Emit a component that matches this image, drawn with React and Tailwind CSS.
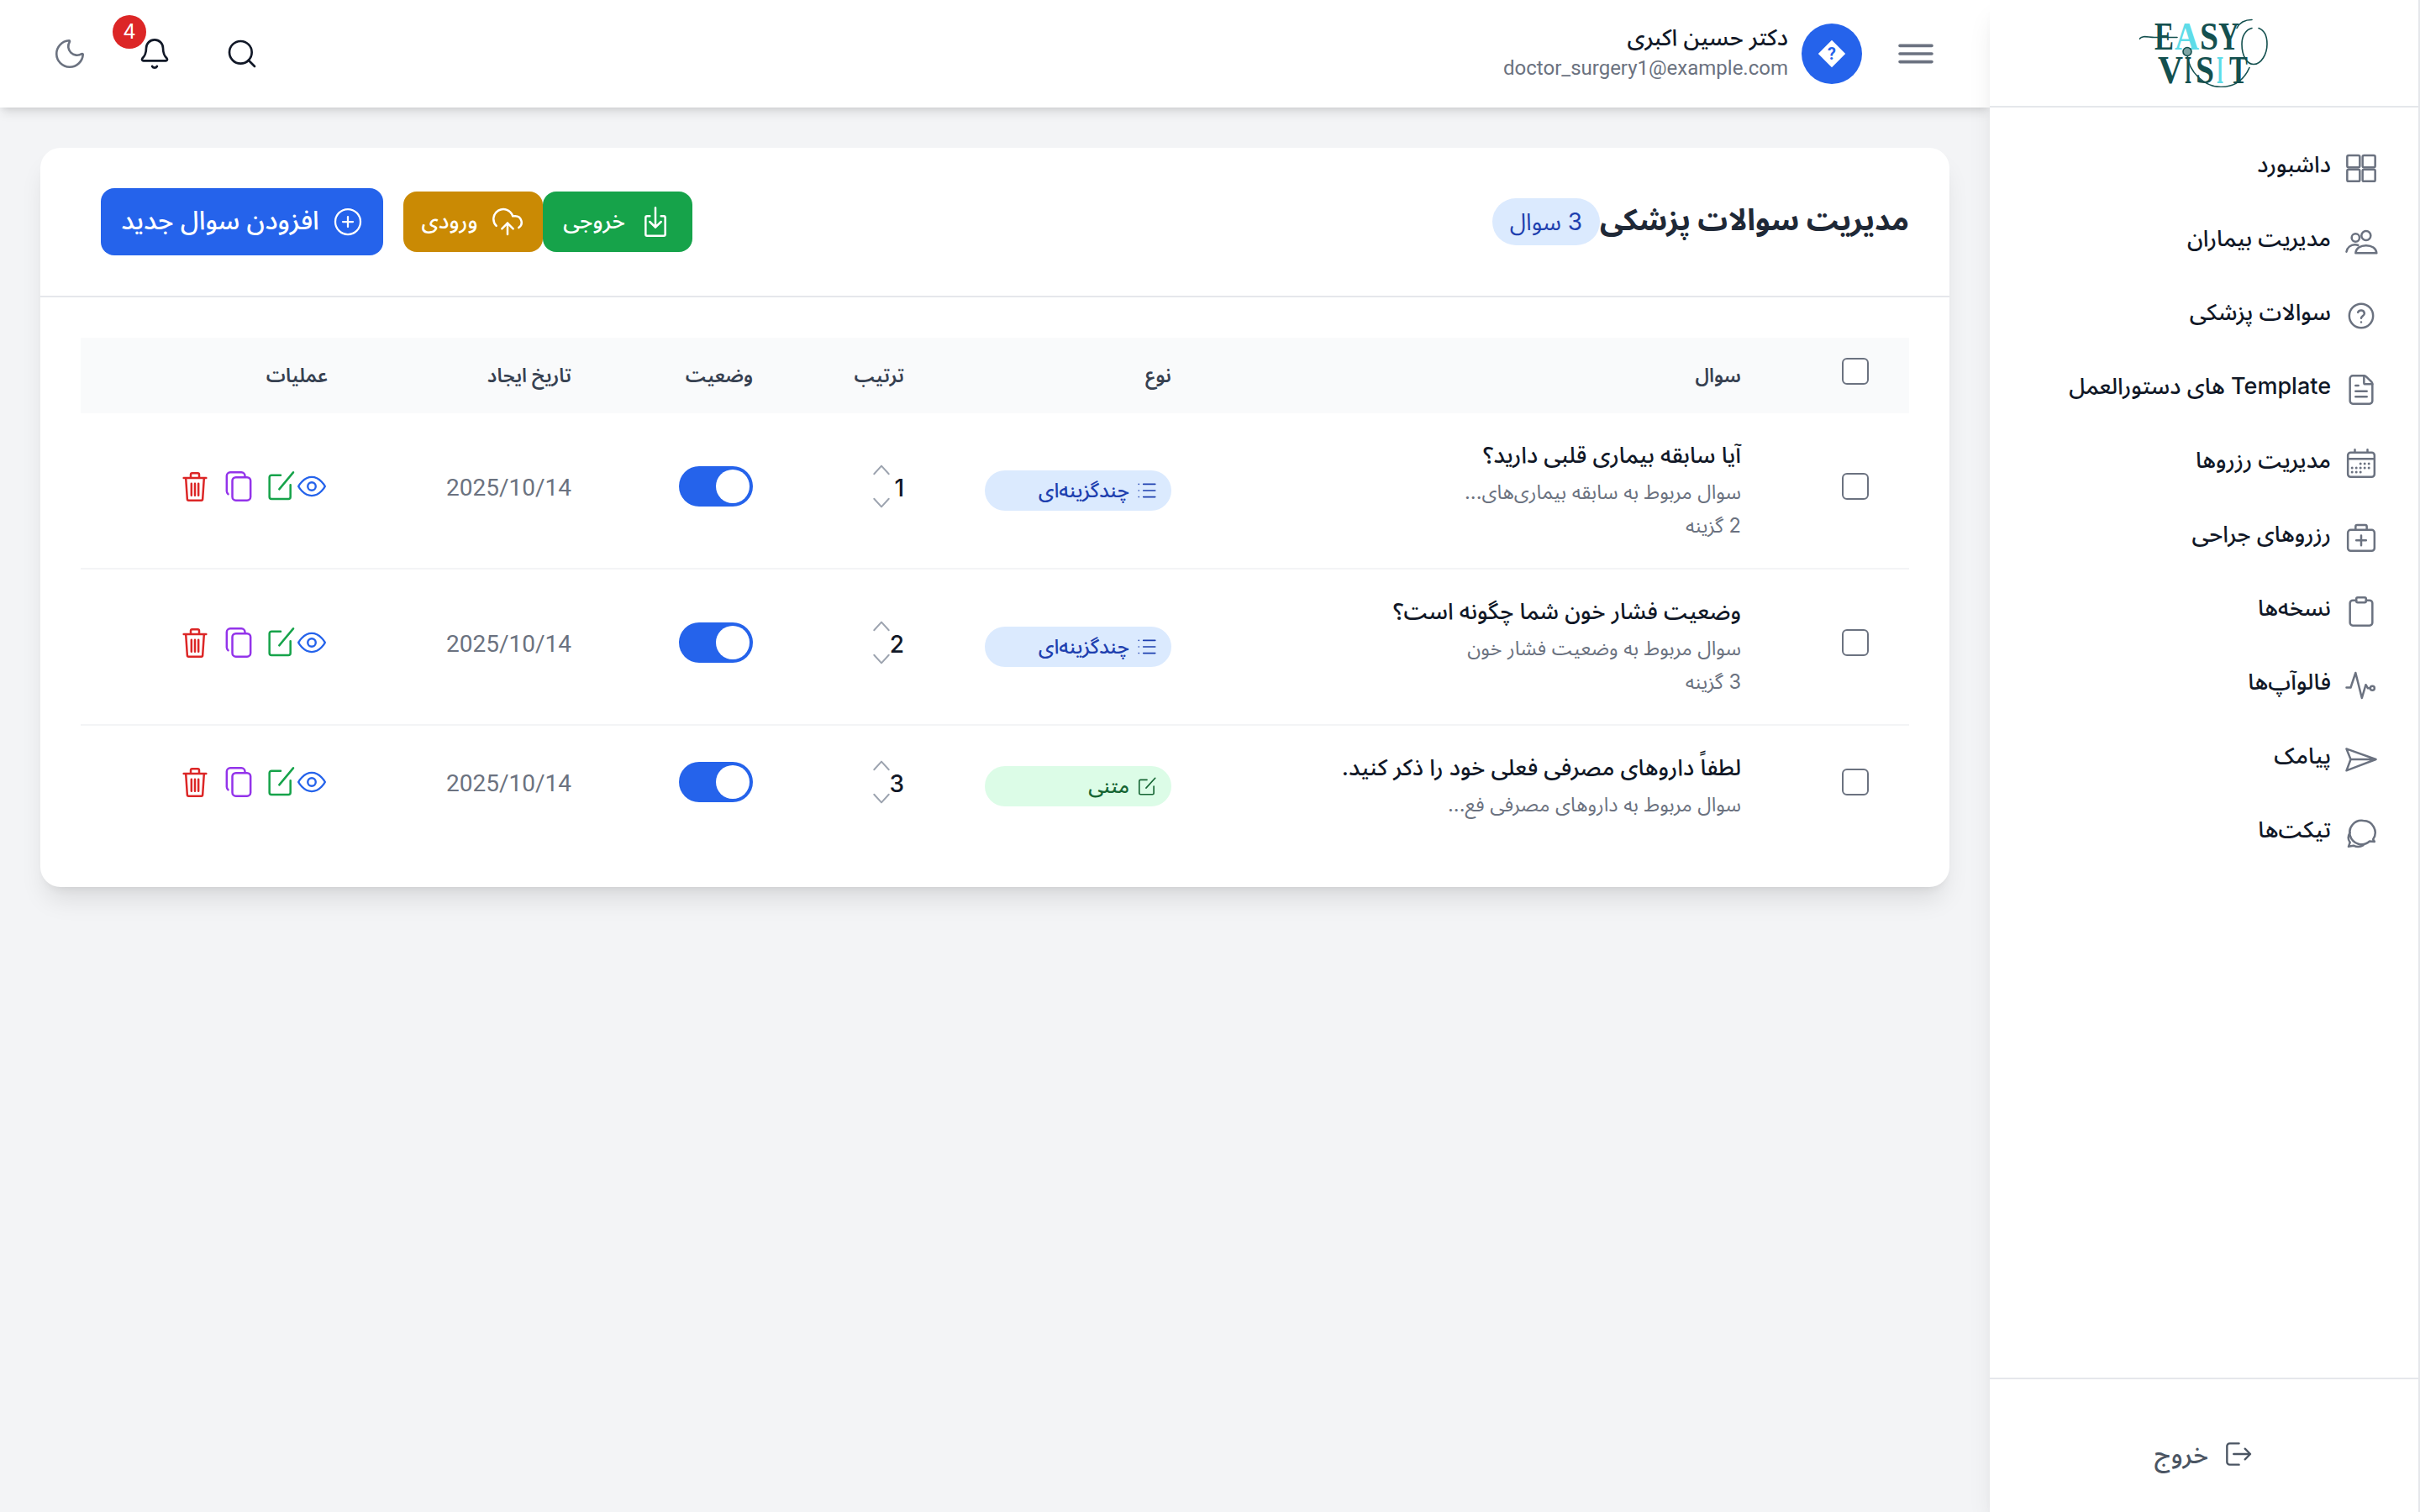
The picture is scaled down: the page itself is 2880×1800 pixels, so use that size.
import { Bell, CirclePlus, CloudUpload, FileText, List, Moon, Search } from 'lucide-react'

const FONT = "[font-family:Inter,'Noto_Sans_Arabic','DejaVu_Sans',sans-serif]"
const ROBOTO = "[font-family:Roboto,'Noto_Sans_Arabic','DejaVu_Sans',sans-serif]"

function Ico({ className, children, sw = 1.5 }) {
  return (
    <svg viewBox="0 0 24 24" fill="none" stroke="currentColor" strokeWidth={sw} strokeLinecap="round" strokeLinejoin="round" className={className}>
      {children}
    </svg>
  )
}

const GridIcon = (p) => (
  <Ico {...p}>
    <rect x="2" y="3" width="9" height="8.500" rx="1" />
    <rect x="13" y="3" width="9" height="8.500" rx="1" />
    <rect x="2" y="13" width="9" height="8.500" rx="1" />
    <rect x="13" y="13" width="9" height="8.500" rx="1" />
  </Ico>
)
const UsersIcon = (p) => (
  <Ico {...p}>
    <circle cx="8" cy="9" r="2.800" />
    <circle cx="15.500" cy="7.500" r="3.300" />
    <path d="M1.500 19c.4-3 3-5 6-5 .9 0 1.600.1 2.300.4" />
    <path d="M8 20c.3-3.500 3.500-5.500 7.500-5.500S22.700 16.500 23 20Z" />
  </Ico>
)
const HelpIcon = (p) => (
  <Ico {...p}>
    <circle cx="12" cy="12" r="8.500" />
    <path d="M9.700 9.500a2.400 2.400 0 0 1 4.600.8c0 1.600-2.300 2-2.300 3.300M12 16.500h.01" />
  </Ico>
)
const CalendarIcon = (p) => (
  <Ico {...p}>
    <rect x="2.500" y="4" width="19" height="17.500" rx="2" />
    <path d="M2.500 8.500h19M7.500 2v2M16.500 2v2" />
    <path strokeWidth="1.800" d="M11.500 12h.01M14.500 12h.01M17.500 12h.01M5.500 15h.01M8.500 15h.01M11.500 15h.01M14.500 15h.01M17.500 15h.01M5.500 18h.01M8.500 18h.01M11.500 18h.01" />
  </Ico>
)
const MedicalIcon = (p) => (
  <Ico {...p}>
    <rect x="2.500" y="6.500" width="19" height="15" rx="2" />
    <path d="M8 6.500V4a1 1 0 0 1 1-1h6a1 1 0 0 1 1 1v2.500M12 10.500v7M8.500 14h7" />
  </Ico>
)
const ClipboardIcon = (p) => (
  <Ico {...p}>
    <path d="M8.500 4H6a2 2 0 0 0-2 2v14a2 2 0 0 0 2 2h12a2 2 0 0 0 2-2V6a2 2 0 0 0-2-2h-2.500" />
    <rect x="8.500" y="2" width="7" height="3.500" rx="1" />
  </Ico>
)
const PulseIcon = (p) => (
  <Ico {...p}>
    <path d="M1.500 13.500H4.500L8 3l4.500 18 2.800-9.500 1.500 2.500h1.200" />
    <circle cx="20" cy="14" r="1.500" />
  </Ico>
)
const SendIcon = (p) => (
  <Ico {...p}>
    <path d="M1.500 4.500 22.500 12 1.500 20l3-8ZM4.500 12h18" />
  </Ico>
)
const ChatIcon = (p) => (
  <Ico {...p}>
    <path d="M13.500 3a8.500 8.500 0 0 1 7 13.300l1 1.700-3.500-.3A8.500 8.500 0 1 1 13.500 3Z" />
    <path d="M4 11.500c-1.500 2.500-1.500 5 0 7l-1 3 3.500-.7c2.500 1.200 5 1 7-.3" />
  </Ico>
)
const LogoutIcon = (p) => (
  <Ico {...p}>
    <path d="M13 4H6a2 2 0 0 0-2 2v12a2 2 0 0 0 2 2h7M9 12h12M17.500 8l4 4-4 4" />
  </Ico>
)
const ExportIcon = (p) => (
  <Ico {...p}>
    <path d="M8 8H6a1 1 0 0 0-1 1v12a1 1 0 0 0 1 1h12a1 1 0 0 0 1-1V9a1 1 0 0 0-1-1h-2M12 2v14M8 12l4 4 4-4" />
  </Ico>
)
const EyeIcon = (p) => (
  <Ico {...p}>
    <path d="M2 12s3.600-7 10-7 10 7 10 7-3.600 7-10 7-10-7-10-7Z" />
    <circle cx="12" cy="12" r="3" />
  </Ico>
)
const EditIcon = (p) => (
  <Ico {...p}>
    <path d="M12 4H5.500a1.500 1.500 0 0 0-1.500 1.500v14A1.500 1.500 0 0 0 5.500 21h12a1.500 1.500 0 0 0 1.500-1.500V11M11 14l10-12" />
  </Ico>
)
const CopyIcon = (p) => (
  <Ico {...p}>
    <rect x="7.500" y="5.500" width="13" height="16.500" rx="2.500" />
    <path d="M4.500 17.500A2.500 2.500 0 0 1 3.500 15.500V4.500A2.500 2.500 0 0 1 6 2h8a2.500 2.500 0 0 1 2.500 2.500" />
  </Ico>
)
const TrashIcon = (p) => (
  <Ico {...p}>
    <path d="M4 6h16M9 6V3.500a1 1 0 0 1 1-1h4a1 1 0 0 1 1 1V6M5.500 6l1 15a1 1 0 0 0 1 1h9a1 1 0 0 0 1-1l1-15M9.500 10v8.500M12 10v8.500M14.500 10v8.500" />
  </Ico>
)
const TextTypeIcon = (p) => (
  <Ico {...p}>
    <path d="M12 5H5a1.500 1.500 0 0 0-1.500 1.500v13A1.500 1.500 0 0 0 5 21h13a1.500 1.500 0 0 0 1.500-1.500V12M11 14 21 3" />
  </Ico>
)
const MenuIcon = (p) => (
  <Ico {...p} sw={1.8}>
    <path d="M2.500 7.200h19M2.500 12h19M2.500 16.800h19" />
  </Ico>
)

const NAV = [
  ['داشبورد', GridIcon],
  ['مدیریت بیماران', UsersIcon],
  ['سوالات پزشکی', HelpIcon],
  ['Template های دستورالعمل', FileText],
  ['مدیریت رزروها', CalendarIcon],
  ['رزروهای جراحی', MedicalIcon],
  ['نسخه‌ها', ClipboardIcon],
  ['فالوآپ‌ها', PulseIcon],
  ['پیامک', SendIcon],
  ['تیکت‌ها', ChatIcon],
]

const QUESTIONS = [
  { title: 'آیا سابقه بیماری قلبی دارید؟', desc: 'سوال مربوط به سابقه بیماری‌های...', options: '2 گزینه', kind: 'multi', order: 1 },
  { title: 'وضعیت فشار خون شما چگونه است؟', desc: 'سوال مربوط به وضعیت فشار خون', options: '3 گزینه', kind: 'multi', order: 2 },
  { title: 'لطفاً داروهای مصرفی فعلی خود را ذکر کنید.', desc: 'سوال مربوط به داروهای مصرفی فع...', kind: 'text', order: 3 },
]

const LOGO_TOP = [['E', 18, 23, '#14504f'], ['A', 42, 29, '#5fdce8'], ['S', 72, 22, '#14504f'], ['Y', 94, 25, '#14504f']]
const LOGO_BOTTOM = [['V', 22, 30, '#14504f'], ['I', 54, 8, '#14504f'], ['S', 67, 22, '#14504f'], ['I', 92, 8, '#5fdce8'], ['T', 107, 22, '#14504f']]

function Logo() {
  return (
    <svg viewBox="0 0 154 81" className="w-[77px] h-[41px] [direction:ltr]">
      <g className="[font-family:'Liberation_Serif',serif]" fontSize="47" fontWeight="700">
        {LOGO_TOP.map(([c, x, w, fill]) => (
          <text key={x} x={x} y="36" textLength={w} lengthAdjust="spacingAndGlyphs" fill={fill}>{c}</text>
        ))}
        {LOGO_BOTTOM.map(([c, x, w, fill]) => (
          <text key={x} x={x} y="76" textLength={w} lengthAdjust="spacingAndGlyphs" fill={fill}>{c}</text>
        ))}
      </g>
      <g fill="none" stroke="#14504f" strokeWidth="1.600" strokeLinecap="round">
        <path d="M0 24c4-5 10-2 18-2h27" />
        <path d="M116 11c3-6 9-10 18-10" />
        <path d="M134 11c-8 2-12 10-12 19 0 14 6 24 14 24 9 0 16-12 16-24 0-9-2-16-10-19" />
        <path d="M131 58c-8 18-22 23-34 23-20 0-38-18-40-38" />
        <circle cx="57" cy="39" r="5" fill="#7fa5a5" />
      </g>
    </svg>
  )
}

function Sidebar() {
  return (
    <aside className="w-64 h-[900px] shrink-0 bg-white border-r border-[#e5e7eb] shadow-lg flex flex-col z-20">
      <div className="h-16 shrink-0 flex items-center justify-center border-b border-[#e5e7eb]">
        <Logo />
      </div>
      <nav className="flex-1 pt-[14px] pr-6">
        {NAV.map(([label, Icon]) => (
          <div key={label} className="h-11 flex items-center gap-2 text-[13.5px] font-medium text-[#111827]">
            <Icon className="w-5 h-5 shrink-0 text-[#6b7280]" strokeWidth={1.5} />
            <span className="-mt-[4px]">{label}</span>
          </div>
        ))}
      </nav>
      <div className="h-20 shrink-0 border-t border-[#e5e7eb] flex items-center justify-center gap-2 pt-2.5 text-[15px] font-medium text-[#4b5563]">
        <LogoutIcon className="w-[19px] h-[19px]" />
        <span>خروج</span>
      </div>
    </aside>
  )
}

function Header() {
  return (
    <header className="h-16 shrink-0 bg-white shadow-md flex items-center justify-between pr-8 pl-[31px] z-10">
      <div className="flex items-center gap-5">
        <MenuIcon className="w-6 h-6 text-[#6b7280]" />
        <div className="flex items-center gap-2">
          <div className="w-9 h-9 rounded-full bg-[#2563eb] flex items-center justify-center">
            <svg viewBox="0 0 20 20" className="w-[18px] h-[18px]">
              <polygon points="10,1 19,10 10,19 1,10" fill="#fff" />
              <text x="10" y="14" textAnchor="middle" fontSize="11" fontWeight="700" fill="#2563eb" className="[font-family:Roboto,sans-serif]">?</text>
            </svg>
          </div>
          <div className="-mt-0.5">
            <p className="text-[13.5px] font-medium text-[#111827] leading-5 -mt-px">دکتر حسین اکبری</p>
            <p className={`text-xs text-[#6b7280] leading-4 ${ROBOTO}`} dir="ltr">doctor_surgery1@example.com</p>
          </div>
        </div>
      </div>
      <div className="flex items-center text-[#111827]">
        <Search className="w-5 h-5" strokeWidth={1.6} />
        <div className="relative mr-8 ml-[30px]">
          <Bell className="w-5 h-5" strokeWidth={1.6} />
          <span className="absolute -top-[13px] left-[-15px] w-5 h-5 rounded-full bg-[#dc2626] text-white text-xs flex items-center justify-center">4</span>
        </div>
        <Moon className="w-[21px] h-[21px] text-[#6b7280]" strokeWidth={1.5} />
      </div>
    </header>
  )
}

function Check() {
  return <div className="w-4 h-4 rounded-[3px] border border-[#6b7280] bg-white" />
}

function Chevron({ up }) {
  return (
    <svg viewBox="0 0 12 8" fill="none" stroke="currentColor" strokeWidth="1.100" strokeLinecap="round" strokeLinejoin="round" className="w-[11px] h-[7px]">
      <path d={up ? 'M1 7 6 1.500 11 7' : 'M1 1 6 6.500 11 1'} />
    </svg>
  )
}

function TypeBadge({ kind }) {
  const multi = kind === 'multi'
  const Icon = multi ? List : TextTypeIcon
  return (
    <span className={`w-[111px] h-6 rounded-full flex items-center pr-2 text-xs font-medium ${multi ? 'bg-[#dbeafe] text-[#1e40af]' : 'bg-[#dcfce7] text-[#166534]'}`}>
      <Icon className="w-[13px] h-[13px] shrink-0 ml-1" strokeWidth={1.5} />
      {multi ? 'چندگزینه‌ای' : 'متنی'}
    </span>
  )
}

function Row({ q, last }) {
  return (
    <tr className={last ? '' : 'border-b border-[#f3f4f6]'}>
      <td className="pr-6 align-middle"><div className="mb-[5px]"><Check /></div></td>
      <td className="px-6 py-[15px] align-middle">
        <p className="text-[13.5px] font-medium text-[#111827] leading-5">{q.title}</p>
        <p className="text-[11.8px] text-[#6b7280] leading-5 mt-0.5">{q.desc}</p>
        {q.options && <p className="text-[11.8px] text-[#6b7280] leading-5">{q.options}</p>}
      </td>
      <td className="px-6 align-middle"><TypeBadge kind={q.kind} /></td>
      <td className="px-6 align-middle">
        <div className="flex items-center mb-[3px]">
          <span className="text-sm font-medium text-[#111827] w-2">{q.order}</span>
          <div className="flex flex-col items-center gap-[13px] text-[#9ca3af] mb-0.5">
            <Chevron up />
            <Chevron />
          </div>
        </div>
      </td>
      <td className="px-6 align-middle">
        <div className="w-11 h-6 rounded-full bg-[#2563eb] flex items-center justify-start pr-0.5 mb-[5px]">
          <span className="w-5 h-5 rounded-full bg-white" />
        </div>
      </td>
      <td className={`px-6 align-middle text-sm text-[#6b7280] ${ROBOTO}`}><div className="mb-[3px]">2025/10/14</div></td>
      <td className="px-6 align-middle">
        <div className="flex items-center mb-[5px]">
          <EyeIcon className="w-[19px] h-[19px] -ml-px text-[#2563eb]" />
          <EditIcon className="w-5 h-5 text-[#16a34a] ml-[5px]" />
          <CopyIcon className="w-5 h-5 text-[#9333ea] ml-1.5" />
          <TrashIcon className="w-5 h-5 text-[#dc2626]" />
        </div>
      </td>
    </tr>
  )
}

function QuestionTable() {
  const th = 'px-6 text-right text-[11.5px] font-semibold text-[#374151]'
  return (
    <table className="w-full table-fixed border-collapse">
      <colgroup>
        <col className="w-[76px]" />
        <col className="w-[339px]" />
        <col className="w-[159px]" />
        <col className="w-[90px]" />
        <col className="w-[108px]" />
        <col className="w-[145px]" />
        <col />
      </colgroup>
      <thead className="bg-[#f9fafb]">
        <tr className="h-[45px]">
          <th className="pr-6 align-middle"><div className="mb-[5px]"><Check /></div></th>
          <th className={th}>سوال</th>
          <th className={th}>نوع</th>
          <th className={th}>ترتیب</th>
          <th className={th}>وضعیت</th>
          <th className={th}>تاریخ ایجاد</th>
          <th className={th}>عملیات</th>
        </tr>
      </thead>
      <tbody>
        {QUESTIONS.map((q, i) => (
          <Row key={q.order} q={q} last={i === QUESTIONS.length - 1} />
        ))}
      </tbody>
    </table>
  )
}

function Button({ icon: Icon, label, className, iconClass = 'w-5 h-5' }) {
  return (
    <button className={`flex items-center justify-center gap-2 rounded-lg text-white font-medium whitespace-nowrap ${className}`}>
      <Icon className={`shrink-0 ${iconClass}`} strokeWidth={1.5} />
      <span className="-mt-0.5">{label}</span>
    </button>
  )
}

export default function App() {
  return (
    <div className="w-[2880px] h-[1800px] overflow-hidden bg-[#f3f4f6]">
      <div dir="rtl" className={`[zoom:2] w-[1440px] h-[900px] flex bg-[#f3f4f6] ${FONT}`}>
        <Sidebar />
        <main className="flex-1 min-w-0 flex flex-col">
          <Header />
          <div className="p-6">
            <div className="bg-white rounded-xl shadow-lg">
              <div className="h-[89px] flex items-center justify-between pr-6 pl-9 border-b border-[#e5e7eb]">
                <div className="flex items-center">
                  <h1 className="text-[17.8px] font-bold text-[#1f2937] -mt-0.5">مدیریت سوالات پزشکی</h1>
                  <span className="w-16 h-7 rounded-full bg-[#dbeafe] text-[#1e40af] text-sm flex items-center justify-center">3 سوال</span>
                </div>
                <div className="flex items-center gap-3">
                  <div className="flex">
                    <Button icon={ExportIcon} label="خروجی" className="w-[89px] h-9 text-[13px] bg-[#16a34a]" />
                    <Button icon={CloudUpload} label="ورودی" className="w-[83px] h-9 text-[13px] bg-[#ca8a04]" />
                  </div>
                  <Button icon={CirclePlus} label="افزودن سوال جدید" iconClass="w-[18px] h-[18px]" className="w-[168px] h-10 text-[15.500px] bg-[#2563eb]" />
                </div>
              </div>
              <div className="px-6 pt-6 pb-6">
                <QuestionTable />
              </div>
            </div>
          </div>
        </main>
      </div>
    </div>
  )
}
